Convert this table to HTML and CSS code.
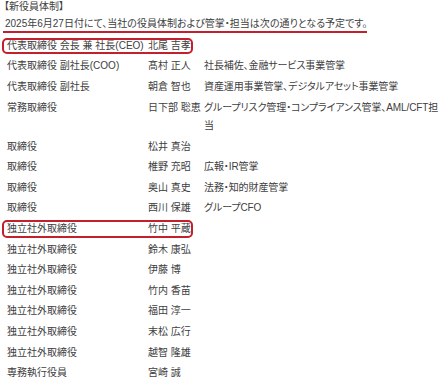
FILE: index.html
```html
<!DOCTYPE html>
<html lang="ja">
<head>
<meta charset="utf-8">
<link rel="stylesheet" href="styles.css">
</head>
<body>
<div class="page">
  <p class="title">【新役員体制】</p>
  <p class="intro"><span class="underline">2025年6月27日付にて、当社の役員体制および管掌・担当は次の通りとなる予定です。</span></p>
  <div class="board">
    <div class="row boxed boxed-top"><span class="pos">代表取締役 会長 兼 社長(CEO)</span><span class="name">北尾 吉孝</span><span class="duty"></span></div>
    <div class="row"><span class="pos">代表取締役 副社長(COO)</span><span class="name">髙村 正人</span><span class="duty">社長補佐、金融サービス事業管掌</span></div>
    <div class="row"><span class="pos">代表取締役 副社長</span><span class="name">朝倉 智也</span><span class="duty">資産運用事業管掌、デジタルアセット事業管掌</span></div>
    <div class="row"><span class="pos">常務取締役</span><span class="name">日下部 聡恵</span><span class="duty">グループリスク管理・コンプライアンス管掌、AML/CFT担当</span></div>
    <div class="row"><span class="pos">取締役</span><span class="name">松井 真治</span><span class="duty"></span></div>
    <div class="row"><span class="pos">取締役</span><span class="name">椎野 充昭</span><span class="duty">広報・IR管掌</span></div>
    <div class="row"><span class="pos">取締役</span><span class="name">奥山 真史</span><span class="duty">法務・知的財産管掌</span></div>
    <div class="row"><span class="pos">取締役</span><span class="name">西川 保雄</span><span class="duty">グループCFO</span></div>
    <div class="row boxed"><span class="pos">独立社外取締役</span><span class="name">竹中 平蔵</span><span class="duty"></span></div>
    <div class="row"><span class="pos">独立社外取締役</span><span class="name">鈴木 康弘</span><span class="duty"></span></div>
    <div class="row"><span class="pos">独立社外取締役</span><span class="name">伊藤 博</span><span class="duty"></span></div>
    <div class="row"><span class="pos">独立社外取締役</span><span class="name">竹内 香苗</span><span class="duty"></span></div>
    <div class="row"><span class="pos">独立社外取締役</span><span class="name">福田 淳一</span><span class="duty"></span></div>
    <div class="row"><span class="pos">独立社外取締役</span><span class="name">末松 広行</span><span class="duty"></span></div>
    <div class="row"><span class="pos">独立社外取締役</span><span class="name">越智 隆雄</span><span class="duty"></span></div>
    <div class="row"><span class="pos">専務執行役員</span><span class="name">宮崎 誠</span><span class="duty"></span></div>
  </div>
</div>
</body>
</html>
```
FILE: styles.css
```css
html, body {
  margin: 0;
  padding: 0;
  background: #ffffff;
}
.page {
  font-family: "Liberation Sans", "Noto Sans CJK JP", sans-serif;
  font-size: 10px;
  color: #404040;
  font-feature-settings: "palt";
}
.title {
  margin: 0;
  padding-left: 4px;
  line-height: 14px;
}
.intro {
  margin: 3px 0 0 0;
  padding-left: 3px;
  line-height: 14px;
}
.underline {
  display: inline-block;
  padding-left: 2px;
  border-bottom: 2px solid #c4202b;
}
.board {
  margin-top: 2.7px;
}
.row {
  position: relative;
  display: grid;
  grid-template-columns: 141px 56px 1fr;
  padding: 1.1px 0 1.1px 7px;
  line-height: 18.4px;
}
.name {
  white-space: nowrap;
}
.duty {
  letter-spacing: -0.1px;
}
.boxed::after {
  content: "";
  position: absolute;
  left: 2px;
  width: 191px;
  top: 1px;
  bottom: 1px;
  border: 2px solid #c4202b;
  border-radius: 5px;
  box-sizing: border-box;
}
.boxed-top::after {
  top: 2px;
  bottom: 2px;
}
```
